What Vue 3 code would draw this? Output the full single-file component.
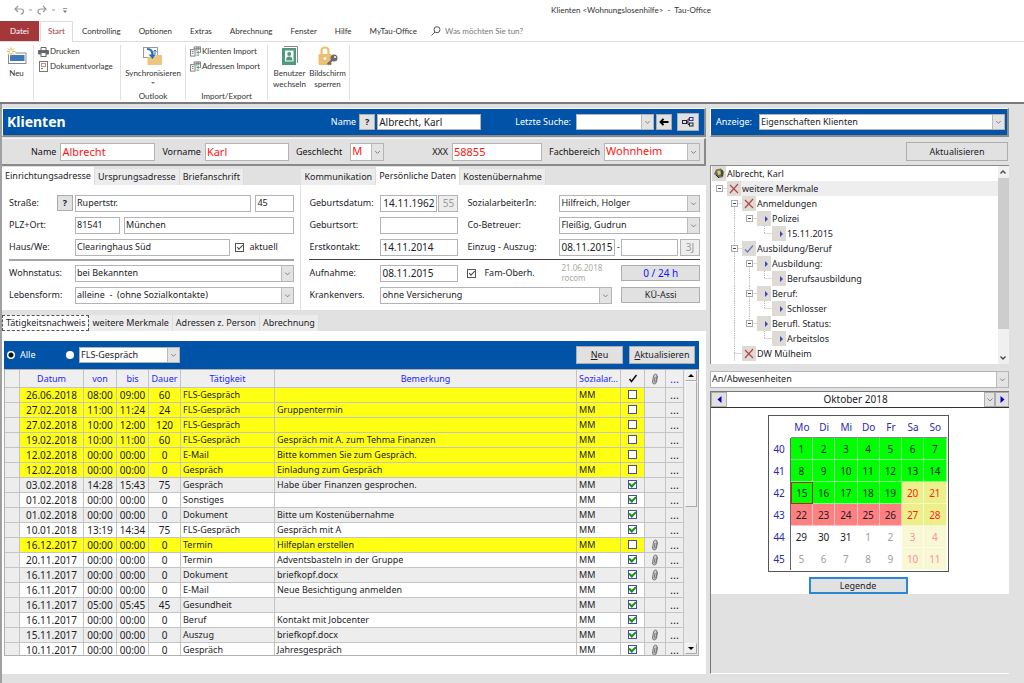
<script setup>
import { ref } from 'vue'

const menu = ['Controlling', 'Optionen', 'Extras', 'Abrechnung', 'Fenster', 'Hilfe', 'MyTau-Office']

const entries = [
  ['26.06.2018', '08:00', '09:00', 60, 'FLS-Gespräch', '', 'open', false],
  ['27.02.2018', '11:00', '11:24', 24, 'FLS-Gespräch', 'Gruppentermin', 'open', false],
  ['27.02.2018', '10:00', '12:00', 120, 'FLS-Gespräch', '', 'open', false],
  ['19.02.2018', '10:00', '11:00', 60, 'FLS-Gespräch', 'Gespräch mit A. zum Tehma Finanzen', 'open', false],
  ['12.02.2018', '00:00', '00:00', 0, 'E-Mail', 'Bitte kommen Sie zum Gespräch.', 'open', false],
  ['12.02.2018', '00:00', '00:00', 0, 'Gespräch', 'Einladung zum Gespräch', 'open', false],
  ['03.02.2018', '14:28', '15:43', 75, 'Gespräch', 'Habe über Finanzen gesprochen.', 'done', false],
  ['01.02.2018', '00:00', '00:00', 0, 'Sonstiges', '', 'done', false],
  ['01.02.2018', '00:00', '00:00', 0, 'Dokument', 'Bitte um Kostenübernahme', 'done', false],
  ['10.01.2018', '13:19', '14:34', 75, 'FLS-Gespräch', 'Gespräch mit A', 'done', false],
  ['16.12.2017', '00:00', '00:00', 0, 'Termin', 'Hilfeplan erstellen', 'open', true],
  ['20.11.2017', '00:00', '00:00', 0, 'Termin', 'Adventsbasteln in der Gruppe', 'done', true],
  ['16.11.2017', '00:00', '00:00', 0, 'Dokument', 'briefkopf.docx', 'done', true],
  ['16.11.2017', '00:00', '00:00', 0, 'E-Mail', 'Neue Besichtigung anmelden', 'done', false],
  ['16.11.2017', '05:00', '05:45', 45, 'Gesundheit', '', 'done', false],
  ['16.11.2017', '00:00', '00:00', 0, 'Beruf', 'Kontakt mit Jobcenter', 'done', false],
  ['15.11.2017', '00:00', '00:00', 0, 'Auszug', 'briefkopf.docx', 'done', true],
  ['10.11.2017', '00:00', '00:00', 0, 'Gespräch', 'Jahresgespräch', 'done', true],
]

// Guide codes: t = line up, b = line down, h = line right, x = expander box
const tree = [
  { icon: 'person', text: 'Albrecht, Karl', guides: [] },
  { icon: 'cross', text: 'weitere Merkmale', guides: ['hx'], selected: true },
  { icon: 'cross', text: 'Anmeldungen', guides: ['', 'bhx'] },
  { icon: 'arrow', text: 'Polizei', guides: ['', 'tb', 'hx'] },
  { icon: 'arrow', text: '15.11.2015', guides: ['', 'tb', '', 'th'] },
  { icon: 'check', text: 'Ausbildung/Beruf', guides: ['', 'tbhx'] },
  { icon: 'arrow', text: 'Ausbildung:', guides: ['', 'tb', 'bhx'] },
  { icon: 'arrow', text: 'Berufsausbildung', guides: ['', 'tb', 'tb', 'th'] },
  { icon: 'arrow', text: 'Beruf:', guides: ['', 'tb', 'tbhx'] },
  { icon: 'arrow', text: 'Schlosser', guides: ['', 'tb', 'tb', 'th'] },
  { icon: 'arrow', text: 'Berufl. Status:', guides: ['', 'tb', 'thx'] },
  { icon: 'arrow', text: 'Arbeitslos', guides: ['', 'tb', '', 'th'] },
  { icon: 'cross', text: 'DW Mülheim', guides: ['', 'tbh'] },
]

const weekdays = ['Mo', 'Di', 'Mi', 'Do', 'Fr', 'Sa', 'So']
const weeks = [
  { no: 40, days: [1, 2, 3, 4, 5, 6, 7], kinds: 'ggggggg' },
  { no: 41, days: [8, 9, 10, 11, 12, 13, 14], kinds: 'ggggggg' },
  { no: 42, days: [15, 16, 17, 18, 19, 20, 21], kinds: 'tggggyy' },
  { no: 43, days: [22, 23, 24, 25, 26, 27, 28], kinds: 'rrrrryy' },
  { no: 44, days: [29, 30, 31, 1, 2, 3, 4], kinds: 'nnnoopp' },
  { no: 45, days: [5, 6, 7, 8, 9, 10, 11], kinds: 'ooooopp' },
]

const filter = ref('alle')
</script>

<template>
  <div class="app">
    <header class="titlebar">
      <div class="quick">
        <svg width="60" height="12" viewBox="0 0 60 12" fill="none" stroke="#999" stroke-width="1.2">
          <path d="M4 1 L1 4 L4 7 M1 4 H7 Q9.500 4 9.500 6.500 Q9.500 9 6.500 9" />
          <path d="M29 1 L32 4 L29 7 M32 4 H27 Q24 4 24 6.500 Q24 9 27 9" />
          <path d="M15 5 h3 M38 5 h3" stroke-width="1" />
          <path d="M49 3.500 h4" stroke-width="1" />
          <path d="M49 5.500 h4 l-2 2.500 z" fill="#777" stroke="none" />
        </svg>
      </div>
      <div class="title">Klienten &lt;Wohnungslosenhilfe&gt;&nbsp; -&nbsp; Tau-Office</div>
    </header>

    <nav class="menu">
      <a href="#" class="file">Datei</a>
      <a href="#" class="active">Start</a>
      <a v-for="m in menu" :key="m" href="#">{{ m }}</a>
      <label class="tell">
        <svg width="10" height="10" viewBox="0 0 10 10" fill="none" stroke="#555" stroke-width="1">
          <circle cx="6" cy="3.700" r="3" />
          <path d="M4 6 L0.500 9.500" />
        </svg>
        <input type="search" placeholder="Was möchten Sie tun?" />
      </label>
    </nav>

    <section class="ribbon">
      <div class="group g-new">
        <button class="big">
          <svg width="20" height="17" viewBox="0 0 20 17">
            <rect x="1.500" y="5.500" width="17.500" height="10.500" fill="#fff" stroke="#8a8a8a" />
            <rect x="3" y="7.500" width="14.500" height="6" fill="#3f78b8" />
            <rect x="0" y="0" width="8.500" height="7" fill="#fff" />
            <path d="M4 0 V8 M0 4 H8.500 M1 1 L7 7 M7 1 L1 7" stroke="#e8ab55" />
            <circle cx="4" cy="4" r="1.500" fill="#fff" />
          </svg>
          <span>Neu</span>
        </button>
      </div>
      <div class="group g-print">
        <button class="small">
          <svg width="11" height="10" viewBox="0 0 11 10">
            <path d="M3 3 V0.500 H8 V3" fill="#fff" stroke="#666" />
            <rect x="0" y="3" width="11" height="4.500" rx="1" fill="#666" />
            <rect x="3" y="5.500" width="5" height="4" fill="#fff" stroke="#666" />
          </svg>
          Drucken
        </button>
        <button class="small">
          <svg width="11" height="11" viewBox="0 0 11 11" fill="none" stroke="#777">
            <rect x="1.500" y="0.500" width="8" height="10" />
            <rect x="3.500" y="2.500" width="4" height="3" stroke="#c98d7c" />
            <path d="M3 7.500 h2" />
          </svg>
          Dokumentvorlage
        </button>
      </div>
      <div class="group g-sync">
        <button class="big">
          <svg width="20" height="20" viewBox="0 0 20 20">
            <rect x="0.500" y="1.500" width="14" height="10" fill="#fff" stroke="#999" />
            <path d="M7 11 h5 l1 -2 h6 v10 H4.500 v-8 z" fill="#f0c67f" />
            <path d="M4 3 Q10 3 9.500 10" fill="none" stroke="#2b6cb5" stroke-width="2.200" />
            <path d="M5.500 8.500 L9.500 13 L13 8.500 z" fill="#2b6cb5" />
            <path d="M12 4 v4 M10.500 5.500 L12 4 l1.500 1.500" fill="none" stroke="#2b6cb5" />
          </svg>
          <span>Synchronisieren</span>
          <i class="drop"></i>
        </button>
        <div class="caption">Outlook</div>
      </div>
      <div class="group g-import">
        <button v-for="n in ['Klienten Import', 'Adressen Import']" :key="n" class="small">
          <svg width="11" height="11" viewBox="0 0 12 11" fill="none" stroke="#777">
            <path d="M4.500 2.500 V0.500 H11.500 V7 M4.500 2.500 H11.500 M7.500 0.500 V5 M9.500 0.500 V4" />
            <rect x="0.500" y="3.500" width="5" height="7" fill="#fff" />
            <path d="M2 5.500 h2 M2 7.500 h2" />
            <path d="M7 6.500 H10 M8.500 5 L10 6.500 L8.500 8 M10 9.500 H7" stroke="#3c9267" />
          </svg>
          {{ n }}
        </button>
        <div class="caption">Import/Export</div>
      </div>
      <div class="group g-user">
        <button class="big">
          <svg width="16" height="20" viewBox="0 0 16 20">
            <path d="M2 0.500 H15.500 V17" fill="none" stroke="#888" />
            <rect x="0" y="2" width="14" height="17" fill="#4f9a7a" />
            <rect x="3" y="4.500" width="8.500" height="11" fill="#fff" />
            <circle cx="7.200" cy="8" r="2" fill="#4f9a7a" />
            <path d="M4 14.500 Q4 10.500 7.200 10.500 Q10.500 10.500 10.500 14.500 z" fill="#4f9a7a" />
          </svg>
          <span>Benutzer wechseln</span>
        </button>
        <button class="big">
          <svg width="20" height="20" viewBox="0 0 20 20">
            <path d="M3.500 9 V5 Q3.500 1.500 7 1.500 Q10.500 1.500 10.500 5 V9" fill="none" stroke="#eebf70" stroke-width="2.200" />
            <rect x="0.500" y="8" width="13" height="11" rx="1" fill="#eebf70" />
            <circle cx="7" cy="12.500" r="1.500" fill="#fff" />
            <circle cx="16" cy="12" r="3.500" fill="#6c6c6c" />
            <path d="M14 14 L9.500 18.500 M11 16.500 l2 2" stroke="#6c6c6c" stroke-width="1.800" />
            <circle cx="17" cy="11" r="1" fill="#fff" />
          </svg>
          <span>Bildschirm sperren</span>
        </button>
      </div>
    </section>

    <main class="work">
      <section class="left">
        <div class="bar blue">
          <h1>Klienten</h1>
          <label for="suchname">Name</label>
          <button class="btn q">?</button>
          <input id="suchname" class="w104" type="text" value="Albrecht, Karl" />
          <label for="letzte" class="last">Letzte Suche:</label>
          <span class="combo w78">
            <select id="letzte"><option></option></select>
            <svg viewBox="0 0 12 16"><path d="M3.500 7 L6 9.500 L8.500 7" /></svg>
          </span>
          <button class="btn back" aria-label="Zurück">
            <svg width="10" height="8" viewBox="0 0 10 8"><path d="M9.500 4 H2 M4.500 0.800 L1.500 4 L4.500 7.200" fill="none" stroke="#000" stroke-width="1.900" /></svg>
          </button>
          <button class="btn net" aria-label="Verknüpfungen">
            <svg width="12" height="10" viewBox="0 0 12 10" fill="none" stroke="#223">
              <rect x="0.500" y="3.500" width="4" height="3" />
              <rect x="7.500" y="0.500" width="3.500" height="3" stroke="#33a" />
              <rect x="7.500" y="6" width="3.500" height="3" />
              <path d="M4.500 5 H6 M6 2 V7.500 M6 2 h1.500 M6 7.500 h1.500" />
            </svg>
          </button>
        </div>

        <div class="bar grey">
          <label for="nn" class="l-name">Name</label>
          <input id="nn" class="w95" type="text" value="Albrecht" />
          <label for="vn">Vorname</label>
          <input id="vn" class="w84" type="text" value="Karl" />
          <label for="gs" class="l-gs">Geschlecht</label>
          <span class="combo w34">
            <select id="gs"><option>M</option></select>
            <svg viewBox="0 0 12 16"><path d="M3.500 7 L6 9.500 L8.500 7" /></svg>
          </span>
          <label for="xx" class="l-xxx">XXX</label>
          <input id="xx" class="w90" type="text" value="58855" />
          <label for="fb">Fachbereich</label>
          <span class="combo w96">
            <select id="fb"><option>Wohnheim</option></select>
            <svg viewBox="0 0 12 16"><path d="M3.500 7 L6 9.500 L8.500 7" /></svg>
          </span>
        </div>

        <div class="panes">
          <div class="pane p1">
            <div class="tabs">
              <button class="on">Einrichtungsadresse</button>
              <button>Ursprungsadresse</button>
              <button>Briefanschrift</button>
            </div>
            <div class="sheet address">
              <div class="row">
                <label for="str">Straße:</label>
                <button class="btn q">?</button>
                <input id="str" class="grow" type="text" value="Rupertstr." />
                <input class="w39" type="text" value="45" aria-label="Hausnummer" />
              </div>
              <div class="row">
                <label for="plz" class="wide">PLZ+Ort:</label>
                <input id="plz" class="w45" type="text" value="81541" />
                <input class="grow" type="text" value="München" aria-label="Ort" />
              </div>
              <div class="row">
                <label for="haus" class="wide">Haus/We:</label>
                <input id="haus" class="grow" type="text" value="Clearinghaus Süd" />
                <label class="tick"><input type="checkbox" checked />aktuell</label>
              </div>
              <hr />
              <div class="row">
                <label for="ws" class="wide">Wohnstatus:</label>
                <span class="combo grow">
                  <select id="ws"><option>bei Bekannten</option></select>
                  <svg viewBox="0 0 12 16"><path d="M3.500 7 L6 9.500 L8.500 7" /></svg>
                </span>
              </div>
              <div class="row">
                <label for="lf" class="wide">Lebensform:</label>
                <span class="combo grow">
                  <select id="lf"><option>alleine&nbsp; -&nbsp; (ohne Sozialkontakte)</option></select>
                  <svg viewBox="0 0 12 16"><path d="M3.500 7 L6 9.500 L8.500 7" /></svg>
                </span>
              </div>
            </div>
          </div>

          <div class="pane p2">
            <div class="tabs">
              <button>Kommunikation</button>
              <button class="on">Persönliche Daten</button>
              <button>Kostenübernahme</button>
            </div>
            <div class="sheet person">
              <div class="row">
                <label for="gd">Geburtsdatum:</label>
                <span class="slot">
                  <input id="gd" class="num grow center" type="text" value="14.11.1962" />
                  <input class="num off w20" type="text" value="55" aria-label="Alter" readonly />
                </span>
                <label for="sa" class="second">SozialarbeiterIn:</label>
                <span class="combo grow">
                  <select id="sa"><option>Hilfreich, Holger</option></select>
                  <svg viewBox="0 0 12 16"><path d="M3.500 7 L6 9.500 L8.500 7" /></svg>
                </span>
              </div>
              <div class="row">
                <label for="go">Geburtsort:</label>
                <span class="slot"><input id="go" class="grow" type="text" /></span>
                <label for="cb" class="second">Co-Betreuer:</label>
                <span class="combo grow">
                  <select id="cb"><option>Fleißig, Gudrun</option></select>
                  <svg viewBox="0 0 12 16"><path d="M3.500 7 L6 9.500 L8.500 7" /></svg>
                </span>
              </div>
              <div class="row">
                <label for="ek">Erstkontakt:</label>
                <span class="slot"><input id="ek" class="num grow" type="text" value="14.11.2014" /></span>
                <label for="ez" class="second">Einzug - Auszug:</label>
                <input id="ez" class="num w56" type="text" value="08.11.2015" />
                <span class="dash">-</span>
                <input class="num grow" type="text" aria-label="Auszug" />
                <input class="off w20 gapl" type="text" value="3J" aria-label="Dauer" readonly />
              </div>
              <hr />
              <div class="row">
                <label for="an">Aufnahme:</label>
                <span class="slot"><input id="an" class="num grow" type="text" value="08.11.2015" /></span>
                <label class="tick second"><input type="checkbox" checked />Fam-Oberh.</label>
                <span class="stamp">21.06.2018<br />rocom</span>
                <button class="btn grow hours">0 / 24 h</button>
              </div>
              <div class="row">
                <label for="kv">Krankenvers.</label>
                <span class="combo insurer">
                  <select id="kv"><option>ohne Versicherung</option></select>
                  <svg viewBox="0 0 12 16"><path d="M3.500 7 L6 9.500 L8.500 7" /></svg>
                </span>
                <button class="btn grow">KÜ-Assi</button>
              </div>
            </div>
          </div>
        </div>

        <div class="tabs lower">
          <button class="on">Tätigkeitsnachweis</button>
          <button>weitere Merkmale</button>
          <button>Adressen z. Person</button>
          <button>Abrechnung</button>
        </div>
        <div class="sheet log">
          <div class="filter">
            <label><input v-model="filter" type="radio" value="alle" name="f" />Alle</label>
            <input v-model="filter" type="radio" value="typ" name="f" aria-label="Nach Tätigkeit" />
            <span class="combo w101">
              <select aria-label="Tätigkeit"><option>FLS-Gespräch</option></select>
              <svg viewBox="0 0 12 16"><path d="M3.500 7 L6 9.500 L8.500 7" /></svg>
            </span>
            <button class="btn new"><u>N</u>eu</button>
            <button class="btn upd"><u>A</u>ktualisieren</button>
          </div>
          <div class="gridbox">
            <div class="scroller">
              <table class="entries">
                <colgroup>
                  <col class="c15" /><col class="c64" /><col class="c33" /><col class="c32" /><col class="c32" />
                  <col class="c94" /><col /><col class="c44" /><col class="c24" /><col class="c21" /><col class="c18" />
                </colgroup>
                <thead>
                  <tr>
                    <th></th><th>Datum</th><th>von</th><th>bis</th><th>Dauer</th><th>Tätigkeit</th><th>Bemerkung</th>
                    <th>Sozialar...</th>
                    <th><svg width="10" height="9" viewBox="0 0 10 9"><path d="M1.500 5 L3.500 7.500 L8.500 1" fill="none" stroke="#111" stroke-width="1.500" /></svg></th>
                    <th><svg class="clip" viewBox="0 0 8 12"><path d="M6.500 3 L5.500 9 Q5 11 3.200 11 Q1.300 10.500 1.500 9 L2.500 3 Q3 1 4.700 1 Q6.300 1.300 6 3 L5 8.500 Q3.500 10 3.200 8.500 L4 4" /></svg></th>
                    <th class="more">...</th>
                  </tr>
                </thead>
                <tbody>
                  <tr v-for="(e, i) in entries" :key="i" :class="[e[6], { alt: i % 2 === 0 }]">
                    <td class="side"></td>
                    <td class="d">{{ e[0] }}</td>
                    <td class="d">{{ e[1] }}</td>
                    <td class="d">{{ e[2] }}</td>
                    <td class="d">{{ e[3] }}</td>
                    <td>{{ e[4] }}</td>
                    <td>{{ e[5] }}</td>
                    <td>MM</td>
                    <td class="c"><input type="checkbox" :checked="e[6] === 'done'" aria-label="Erledigt" /></td>
                    <td class="c side">
                      <svg v-if="e[7]" class="clip" viewBox="0 0 8 12"><path d="M6.500 3 L5.500 9 Q5 11 3.200 11 Q1.300 10.500 1.500 9 L2.500 3 Q3 1 4.700 1 Q6.300 1.300 6 3 L5 8.500 Q3.500 10 3.200 8.500 L4 4" /></svg>
                    </td>
                    <td class="c side dots">...</td>
                  </tr>
                </tbody>
              </table>
            </div>
            <div class="vbar">
              <button class="nub" aria-label="Nach oben"><svg width="6" height="3" viewBox="0 0 6 3"><path d="M0 3 L3 0 L6 3 z" /></svg></button>
              <div class="thumb"></div>
              <div class="track"></div>
              <button class="nub" aria-label="Nach unten"><svg width="6" height="3" viewBox="0 0 6 3"><path d="M0 0 L3 3 L6 0 z" /></svg></button>
            </div>
          </div>
        </div>
      </section>

      <aside class="right">
        <div class="bar blue show">
          <label for="az">Anzeige:</label>
          <span class="combo grow">
            <select id="az"><option>Eigenschaften Klienten</option></select>
            <svg viewBox="0 0 12 16"><path d="M3.500 7 L6 9.500 L8.500 7" /></svg>
          </span>
        </div>
        <button class="btn refresh">Aktualisieren</button>

        <div class="tree">
          <ul>
            <li v-for="(t, i) in tree" :key="i" :class="{ sel: t.selected }">
              <svg v-for="(g, k) in t.guides" :key="k" width="15" height="15" viewBox="0 0 15 15" fill="none" stroke="#b5b5b5" stroke-dasharray="1 1">
                <path v-if="g.includes('t')" d="M7.500 0 V7.500" />
                <path v-if="g.includes('b')" d="M7.500 7.500 V15" />
                <path v-if="g.includes('h')" d="M7.500 7.500 H15" />
                <g v-if="g.includes('x')" stroke-dasharray="none">
                  <rect x="4.500" y="4.500" width="6" height="6" fill="#fff" stroke="#aaa" />
                  <path d="M6 7.500 h3" stroke="#447" />
                </g>
              </svg>
              <svg class="ico" width="14" height="15" viewBox="0 0 14 15" fill="none">
                <rect width="14" height="15" fill="#dedbd6" />
                <path v-if="t.icon === 'cross'" d="M3 4 L11 12 M11 3 L3 12" stroke="#b5454a" stroke-width="1.200" />
                <path v-if="t.icon === 'check'" d="M3 8.500 L5.500 11 L11 4.500" stroke="#6a78c0" stroke-width="1.300" />
                <path v-if="t.icon === 'arrow'" d="M8 5 L11 8 L8 11 z" fill="#3b48b5" />
                <g v-if="t.icon === 'person'">
                  <path d="M2 8 L4 3.500 L9 2.500 L12 6 L11 11 L7 12 z" fill="#6f6f5c" />
                  <path d="M5 5 L8 4.500 L9 8 L6.500 9 z" fill="#d9cf5a" />
                  <path d="M10 4 v6 M4 9 l3 3" stroke="#222" />
                </g>
              </svg>
              <span>{{ t.text }}</span>
            </li>
          </ul>
          <div class="treebar">
            <svg width="10" height="12" viewBox="0 0 10 12"><path d="M2.500 7.500 L5 5 L7.500 7.500" /></svg>
            <div class="treethumb"></div>
            <svg width="10" height="12" viewBox="0 0 10 12"><path d="M2.500 4.500 L5 7 L7.500 4.500" /></svg>
          </div>
        </div>

        <span class="combo absence">
          <select aria-label="Ansicht"><option>An/Abwesenheiten</option></select>
          <svg viewBox="0 0 12 16"><path d="M3.500 7 L6 9.500 L8.500 7" /></svg>
        </span>

        <div class="calbox">
          <div class="calhead">
            <button class="btn nav" aria-label="Voriger Monat"><svg width="5" height="7" viewBox="0 0 5 7"><path d="M4.500 0 V7 L0.500 3.500 z" fill="#00c" /></svg></button>
            <span class="month">Oktober 2018</span>
            <button class="btn nav pick" aria-label="Monat wählen"><svg width="8" height="6" viewBox="0 0 8 6" fill="none" stroke="#888"><path d="M1.500 1.500 L4 4 L6.500 1.500" /></svg></button>
            <button class="btn nav next" aria-label="Nächster Monat"><svg width="5" height="7" viewBox="0 0 5 7"><path d="M0.500 0 V7 L4.500 3.500 z" fill="#00c" /></svg></button>
          </div>
          <div class="calbody">
            <table class="cal">
              <thead>
                <tr><th></th><th v-for="w in weekdays" :key="w" class="wd">{{ w }}</th></tr>
              </thead>
              <tbody>
                <tr v-for="w in weeks" :key="w.no">
                  <th class="wk">{{ w.no }}</th>
                  <td v-for="(d, i) in w.days" :key="i" :class="'k-' + w.kinds[i]">{{ d }}</td>
                </tr>
              </tbody>
            </table>
            <button class="btn legend">Legende</button>
          </div>
        </div>
      </aside>
    </main>
  </div>
</template>

<style>
html,
body {
  background: #fff;
}
</style>

<style scoped>
* {
  box-sizing: border-box;
}
.app {
  display: flex;
  flex-direction: column;
  height: 100vh;
  min-height: 560px;
  overflow: hidden;
  background: #fff;
  color: #1c1c28;
  font: 9px/12px 'Noto Sans', 'DejaVu Sans', sans-serif;
}
button,
input,
select {
  font: inherit;
  color: inherit;
  margin: 0;
  padding: 0;
  border-radius: 0;
  outline: 0;
}
a {
  color: inherit;
  text-decoration: none;
}
svg {
  display: block;
  flex: none;
}

/* title, menu and ribbon */
.titlebar,
.menu,
.ribbon {
  font: 8px/11px Lato, 'Noto Sans', sans-serif;
  color: #333;
}
.titlebar {
  display: flex;
  height: 21px;
  align-items: center;
}
.quick {
  width: 238px;
  padding-left: 14px;
}
.title {
  flex: 1;
  text-align: center;
}
.menu {
  display: flex;
  height: 21px;
  border-bottom: 1px solid #dcdcdc;
}
.menu a {
  display: flex;
  align-items: center;
  padding: 0 9px;
}
.menu .file {
  background: #a4373a;
  color: #fff;
  width: 39px;
  justify-content: center;
  padding: 0;
}
.menu .active {
  border: 1px solid #dcdcdc;
  border-bottom: 0;
  color: #a4373a;
  background: #fff;
  margin: 0 0 -1px 1px;
  padding: 0 0 2px;
  width: 33px;
  justify-content: center;
}
.tell {
  display: flex;
  align-items: center;
  gap: 4px;
  margin-left: 5px;
}
.tell input {
  appearance: none;
  border: 0;
  background: none;
  width: 120px;
}
.tell input::placeholder {
  color: #777;
  opacity: 1;
}
.ribbon {
  display: flex;
  height: 62px;
  padding: 3px 0 2px;
  border-bottom: 2px solid #7b7b7b;
}
.group {
  display: flex;
  border-right: 1px solid #e0e0e0;
}
.g-new {
  width: 34px;
  justify-content: center;
}
.g-print,
.g-import {
  flex-direction: column;
  gap: 4px;
  padding: 1px 4px 0;
}
.g-print {
  width: 87px;
}
.g-sync {
  width: 65px;
  flex-direction: column;
  align-items: center;
}
.g-import {
  width: 82px;
}
.g-user {
  width: 82px;
  justify-content: center;
}
.ribbon button {
  border: 0;
  background: none;
}
.big {
  display: flex;
  flex-direction: column;
  align-items: center;
  width: 38px;
}
.g-sync .big {
  width: 60px;
}
.big svg {
  height: 20px;
  margin: 1px 0 2px;
}
.small {
  display: flex;
  align-items: center;
  gap: 1px;
  height: 11px;
  white-space: nowrap;
}
.drop {
  border: 2px solid transparent;
  border-top-color: #777;
  border-bottom: 0;
  margin-top: 3px;
}
.caption {
  margin-top: auto;
  text-align: center;
  line-height: 8px;
}

/* workspace */
.work {
  flex: 1;
  min-height: 0;
  display: flex;
  gap: 4px;
  padding: 4px 15px 9px 0;
  background: #e1e1e1;
  border-left: 2px solid #a0a0a0;
}
.left {
  flex: 704 1 0;
  min-width: 0;
  display: flex;
  flex-direction: column;
}
.right {
  flex: 299 1 0;
  min-width: 0;
  display: flex;
  flex-direction: column;
}
.bar {
  display: flex;
  align-items: center;
  height: 29px;
  border: solid #8a8a8a;
  border-width: 0 2px 2px 0;
}
.blue {
  background: #0053a6;
  color: #fff;
  border-top: 1px solid #fff;
  border-left: 1px solid #fff;
  padding-right: 5px;
}
.blue label {
  margin-right: 3px;
}
.blue h1 {
  flex: 1;
  margin: 0 0 0 4px;
  font: bold 14px/18px 'Noto Sans', sans-serif;
}
.blue .last {
  margin: 0 5px 0 34px;
}
.grey {
  height: 28px;
  margin-top: 1px;
  border-top: 1px solid #f5f5f5;
  padding-right: 4px;
}
.grey label {
  margin: 0 4px 0 7px;
  color: #111;
}
.grey .l-name {
  margin-left: 29px;
}
.grey .l-gs {
  margin-right: 8px;
}
.grey .l-xxx {
  margin-left: auto;
}
.grey input,
.grey select {
  color: #ff1414;
  font-size: 11px;
}
input[type='text'] {
  height: 17px;
  min-width: 0;
  border: 1px solid #b4b4b8;
  background: #fff;
  padding: 0 1px 1px;
}
.blue input[type='text'] {
  height: 16px;
  color: #1c1c28;
  font-size: 10px;
}
.grey input[type='text'],
.grey .combo {
  height: 18px;
}
input.num {
  font-size: 10px;
}
.center {
  text-align: center;
}
input.off {
  background: #ededed;
  color: #999;
  text-align: center;
  margin-left: 1px;
  font-size: 10px;
}
.combo {
  display: flex;
  height: 17px;
  min-width: 0;
  border: 1px solid #b4b4b8;
  background: #fff;
  color: #1c1c28;
}
.combo select {
  flex: 1;
  min-width: 0;
  width: 100%;
  appearance: none;
  border: 0;
  background: none;
  padding: 0 0 1px 1px;
}
.combo svg {
  width: 12px;
  height: 100%;
  background: #e3e3e3;
  border-left: 1px solid #bbb;
  fill: none;
  stroke: #777;
}
.blue .combo {
  height: 16px;
}
.btn {
  border: 1px solid #adadad;
  background: #e1e1e1;
  color: #1c1c28;
  display: flex;
  align-items: center;
  justify-content: center;
}
.q {
  width: 16px;
  height: 16px;
  font-weight: bold;
  margin-right: 2px;
}
.back {
  width: 16px;
  height: 16px;
  margin: 0 5px 0 2px;
}
.net {
  width: 22px;
  height: 18px;
}
.w20 { width: 20px; }
.w34 { width: 34px; }
.w39 { width: 39px; }
.w45 { width: 45px; }
.w56 { width: 56px; }
.w78 { width: 78px; }
.w84 { width: 84px; }
.w90 { width: 90px; }
.w95 { width: 95px; }
.w96 { width: 96px; }
.w101 { width: 101px; }
.w104 { width: 104px; }
.grow { flex: 1; width: 0; }

/* tab strips and form sheets */
.panes {
  display: flex;
  gap: 1px;
  margin-top: 1px;
}
.p1 {
  flex: 298 1 0;
  min-width: 0;
}
.p2 {
  flex: 404 1 0;
  min-width: 0;
}
.tabs {
  display: flex;
  height: 18px;
  align-items: flex-end;
}
.tabs button {
  height: 16px;
  border: 0;
  border-right: 1px solid #dcdcdc;
  background: #ececec;
  padding: 0 3px;
  white-space: nowrap;
}
.tabs .on {
  height: 18px;
  background: #fff;
}
.sheet {
  background: #fff;
}
.address,
.person {
  height: 125px;
  padding: 9px 6px 5px 7px;
  display: flex;
  flex-direction: column;
  gap: 4px;
}
.row {
  display: flex;
  align-items: center;
  height: 18px;
  white-space: nowrap;
}
.address .row > label:first-child {
  width: 48px;
}
.address .row > label.wide {
  width: 66px;
}
.address .w39,
.address .w45 + input {
  margin-left: 4px;
}
hr {
  width: 100%;
  margin: -1px 0;
  border: 0;
  border-top: 2px solid #a5a5a5;
}
.person {
  padding-left: 8px;
}
.person hr {
  border-top: 1px solid #444;
  margin: -1px 0 0;
}
.person .row > label:first-child {
  width: 71px;
}
.slot {
  display: flex;
  width: 78px;
}
.person .second {
  width: 92px;
  margin-left: 9px;
}
.dash {
  width: 6px;
  text-align: center;
}
.gapl.off {
  margin-left: 2px;
}
.tick {
  display: flex;
  align-items: center;
  gap: 5px;
  margin-left: 5px;
  width: 59px;
}
.tick.second {
  gap: 8px;
}
input[type='checkbox'] {
  appearance: none;
  width: 9px;
  height: 9px;
  border: 1px solid #555;
  background: #fff;
  display: grid;
  place-items: center;
  flex: none;
}
input[type='checkbox']:checked::before {
  content: '';
  width: 5px;
  height: 2px;
  border: solid #444;
  border-width: 0 0 1px 1px;
  transform: rotate(-45deg);
  margin-bottom: 2px;
}
.stamp {
  width: 62px;
  padding-left: 2px;
  font-size: 8px;
  line-height: 10px;
  color: #a9a99f;
}
.person .btn {
  height: 16px;
}
.person .hours {
  color: #1414ff;
  font-size: 10px;
}
.insurer {
  width: 232px;
  margin-right: 9px;
}
.lower {
  margin-top: 3px;
}
.lower .on {
  border: 1px dashed #555;
  height: 16px;
}

/* activity log */
.log {
  flex: 1;
  min-height: 0;
  display: flex;
  flex-direction: column;
  padding: 10px 7px 18px 2px;
}
.filter {
  display: flex;
  align-items: center;
  height: 28px;
  background: #0053a6;
  padding: 0 4px 0 3px;
  color: #fff;
}
.filter label {
  display: flex;
  align-items: center;
  gap: 5px;
  width: 59px;
}
input[type='radio'] {
  appearance: none;
  width: 8px;
  height: 8px;
  border-radius: 50%;
  background: #fff;
  border: 0;
}
input[type='radio']:checked {
  background: radial-gradient(circle, #111 0 2px, #fff 3px);
}
.filter .combo {
  height: 16px;
  margin: 0 auto 0 5px;
}
.filter .btn {
  height: 18px;
}
.new {
  width: 47px;
  margin-right: 6px;
}
.upd {
  width: 66px;
}
.gridbox {
  flex: 1;
  min-height: 0;
  display: flex;
  border: 1px solid #b0b0b0;
  background: #e8e8e8;
}
.scroller {
  flex: 1;
  min-width: 0;
  overflow: hidden;
}
.entries {
  width: 100%;
  table-layout: fixed;
  border-collapse: separate;
  border-spacing: 0;
}
.c15 { width: 15px; }
.c18 { width: 18px; }
.c21 { width: 21px; }
.c24 { width: 24px; }
.c32 { width: 32px; }
.c33 { width: 33px; }
.c44 { width: 44px; }
.c64 { width: 64px; }
.c94 { width: 94px; }
.entries th,
.entries td {
  height: 15px;
  padding: 0 0 0 2px;
  border: solid #c4c4c4;
  border-width: 0 1px 1px 0;
  line-height: 14px;
  white-space: nowrap;
  overflow: hidden;
}
.entries th {
  height: 18px;
  padding: 0;
  background: #efefef;
  color: #1e1eff;
  font-weight: normal;
}
.entries th svg {
  margin: 0 auto;
}
.entries tr {
  background: #fff;
}
.entries tr.alt {
  background: #ededed;
}
.entries tr.open {
  background: #ffff14;
}
.entries td.side {
  background: #ededed;
}
.entries td.d {
  padding: 0;
  text-align: center;
  font-size: 10px;
}
.entries td.c {
  padding: 0;
  text-align: center;
}
.entries td input {
  margin: 0 auto 2px;
  border-color: #4a4aa0;
}
.entries td input:checked::before {
  border-color: #119011;
  border-width: 0 0 2px 2px;
  height: 3px;
}
.clip {
  width: 8px;
  height: 12px;
  margin: 0 auto;
  fill: #ccc;
  stroke: #777;
}
.entries .dots,
.entries .more {
  font-size: 11px;
}
.vbar {
  width: 14px;
  display: flex;
  flex-direction: column;
  align-items: center;
  padding-bottom: 1px;
}
.nub {
  width: 12px;
  height: 11px;
  border: 1px solid #f8f8f8;
  border-right-color: #aaa;
  border-bottom-color: #aaa;
  background: #efefef;
  display: grid;
  place-items: center;
}
.thumb {
  flex: 125;
  width: 12px;
  background: #efefef;
  border: 1px solid #f8f8f8;
  border-right-color: #aaa;
  border-bottom-color: #aaa;
}
.track {
  flex: 137;
}

/* right column */
.show label {
  margin: 0 7px 0 5px;
}
.show {
  padding-right: 2px;
}
.refresh {
  align-self: flex-end;
  width: 102px;
  height: 19px;
  margin: 5px 1px 4px;
}
.tree {
  display: flex;
  height: 199px;
  border: solid #8a8a8a;
  border-width: 1px 0 0 1px;
  background: #fff;
}
.tree ul {
  flex: 1;
  margin: 0;
  padding: 0 0 0 1px;
  list-style: none;
}
.tree li {
  display: flex;
  height: 15px;
  align-items: center;
}
.tree li.sel {
  background: linear-gradient(90deg, #fff 15px, #eee 15px);
}
.tree li span {
  margin-left: 1px;
}
.treebar {
  width: 11px;
  display: flex;
  flex-direction: column;
  background: #f0f0f0;
}
.treebar svg {
  fill: none;
  stroke: #444;
  stroke-width: 1.300;
}
.treethumb {
  height: 151px;
  background: #cdcdcd;
  margin-bottom: auto;
}
.absence {
  margin-top: 7px;
}
.calbox {
  flex: 1;
  min-height: 0;
  margin-top: 3px;
  border: solid #777;
  border-width: 1px 0 0 1px;
  border-bottom: 1px solid #fff;
}
.calhead {
  display: flex;
  height: 16px;
  background: #fff;
  border-bottom: 1px solid #333;
  font-size: 10px;
}
.nav {
  width: 16px;
}
.pick {
  width: 11px;
}
.next {
  width: 14px;
}
.month {
  flex: 1;
  text-align: center;
  line-height: 15px;
}
.calbody {
  display: flex;
  flex-direction: column;
  align-items: center;
  background: #fff;
  padding: 7px 4px 0 0;
}
.cal {
  width: 181px;
  table-layout: fixed;
  border: 1px solid #555;
  border-spacing: 0;
  padding: 0 1px 1px 0;
  font-size: 10px;
  text-align: center;
}
.cal th,
.cal td {
  height: 22px;
  padding: 0;
  font-weight: normal;
  border: solid #ffffff80;
  border-width: 0 1px 1px 0;
}
.cal th {
  color: #2a2aaa;
  border: 0;
}
.cal th.wd {
  border-bottom: 1px solid #888;
}
.cal th.wk {
  border-right: 1px solid #666;
}
.cal td.k-g {
  background: #0f0;
}
.cal td.k-t {
  background: #0f0;
  border: 1px solid #b03000;
}
.cal td.k-r {
  background: #ff8080;
}
.cal td.k-y {
  background: #ecf08a;
  color: #ff1e1e;
}
.cal td.k-o {
  color: #a0a0a0;
}
.cal td.k-p {
  background: #f8f8d4;
  color: #ff8fa5;
}
.legend {
  width: 99px;
  height: 17px;
  margin-top: 5px;
  border: 2px solid #2a86d8;
}
</style>
